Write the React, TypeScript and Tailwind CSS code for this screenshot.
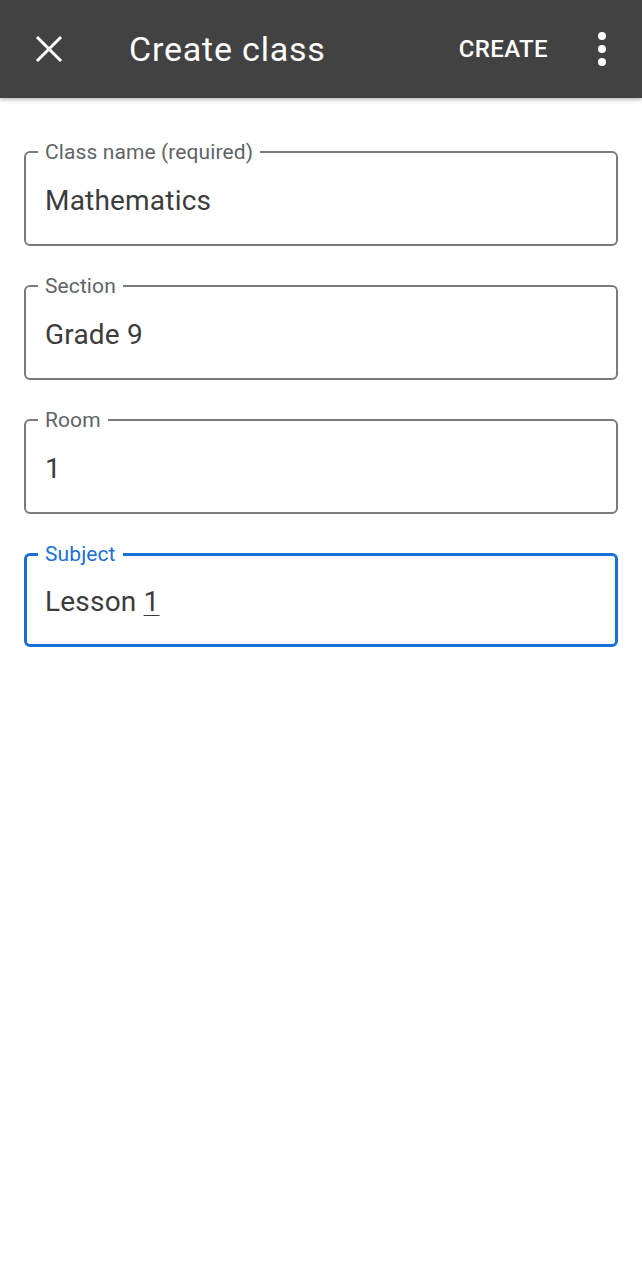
import React from "react";

function Field({ label, value, focused }: { label: string; value: React.ReactNode; focused?: boolean }) {
  return (
    <fieldset
      className={
        focused
          ? "border-[3px] border-[#1a6fd6] rounded-[6px] pl-[11px] pr-[12px] pt-[19px] pb-[25px] m-0 min-w-0"
          : "border-2 border-[#7b7b7b] rounded-[6px] pl-[12px] pr-[12px] pt-[20px] pb-[26px] m-0 min-w-0"
      }
    >
      <legend
        className={
          "px-[7px] text-[21px] leading-[24px] tracking-[0.1px] " + (focused ? "text-[#1a6fd6]" : "text-[#5f6368]")
        }
      >
        {label}
      </legend>
      <div className="pl-[7px] text-[28px] leading-[34px] text-[#3c3c3c] tracking-[0.2px]">{value}</div>
    </fieldset>
  );
}

export default function App() {
  return (
    <div className="min-h-[1280px] bg-white font-['Roboto','Noto_Sans',sans-serif]">
      <header className="h-[98px] bg-[#424242] flex items-center shadow-[0_2px_4px_rgba(0,0,0,0.25)] relative">
        <div className="w-[98px] h-[98px] flex items-center justify-center">
          <svg width="28" height="28" viewBox="0 0 28 28">
            <path d="M3 3 L25 25 M25 3 L3 25" stroke="white" strokeWidth="3" strokeLinecap="square" />
          </svg>
        </div>
        <div className="ml-[31px] text-white text-[34px] leading-none tracking-[0.8px]">Create class</div>
        <div className="ml-auto mr-[14px] text-white text-[24px] font-medium tracking-[0.4px]">CREATE</div>
        <div className="w-[80px] flex items-center justify-center">
          <svg width="10" height="34" viewBox="0 0 10 34">
            <circle cx="5" cy="4" r="4" fill="white" />
            <circle cx="5" cy="17" r="4" fill="white" />
            <circle cx="5" cy="30" r="4" fill="white" />
          </svg>
        </div>
      </header>
      <main className="px-6 pt-[42px] flex flex-col gap-[28px]">
        <Field label="Class name (required)" value="Mathematics" />
        <Field label="Section" value="Grade 9" />
        <Field label="Room" value="1" />
        <Field
          label="Subject"
          focused
          value={
            <>
              Lesson <span className="underline decoration-1 underline-offset-[4px]">1</span>
            </>
          }
        />
      </main>
    </div>
  );
}
